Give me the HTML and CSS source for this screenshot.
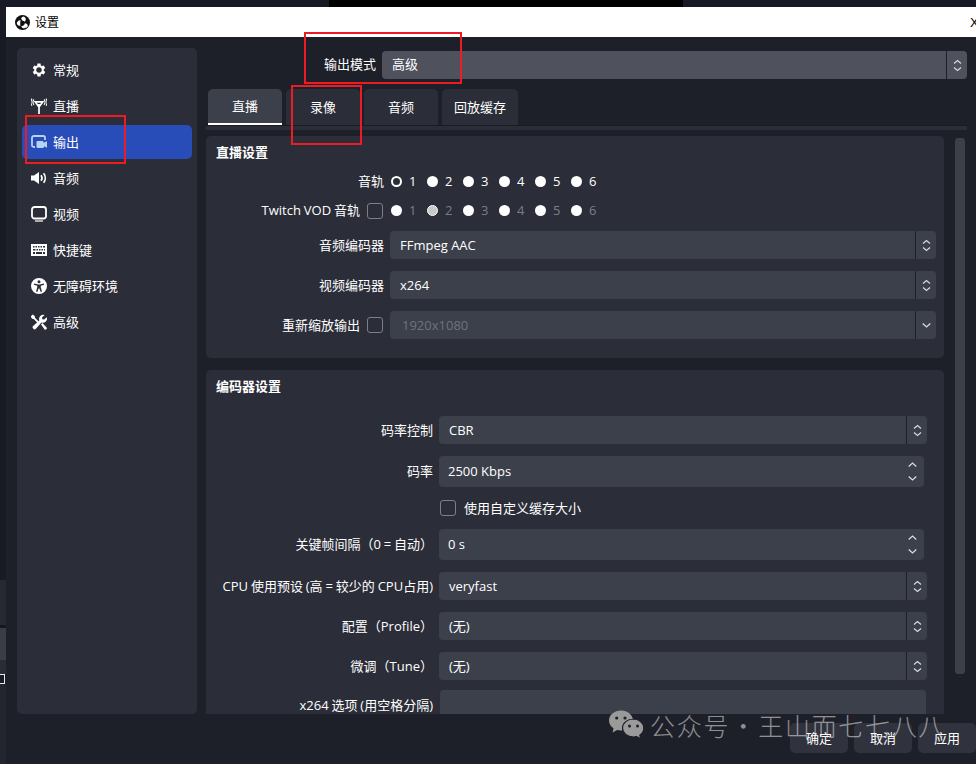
FILE: index.html
```html
<!DOCTYPE html>
<html lang="zh-CN">
<head>
<meta charset="utf-8">
<title>设置</title>
<link rel="stylesheet" href="styles.css">
</head>
<body>
<svg class="defs" width="0" height="0" aria-hidden="true">
  <defs>
    <symbol id="updown" viewBox="0 0 9 13"><path d="M1 4.500 4.500 1.500 8 4.500M1 8.500 4.500 11.500 8 8.500" fill="none" stroke="#d8dae0" stroke-width="1.200"/></symbol>
    <symbol id="spin-up" viewBox="0 0 9 5"><path d="M.7 4.400 4.500 1 8.300 4.400" fill="none" stroke="#d8dae0" stroke-width="1.300"/></symbol>
    <symbol id="spin-down" viewBox="0 0 9 5"><path d="M.7.6 4.500 4 8.300.6" fill="none" stroke="#d8dae0" stroke-width="1.300"/></symbol>
  </defs>
</svg>
<div class="page">
  <div class="topstrip">
    <div class="top-a"></div>
    <div class="top-b"></div>
    <div class="top-c"></div>
  </div>
  <div class="desk">
    <div class="behind">
      <div class="b1"></div>
      <div class="b2"></div>
      <div class="b3"></div>
      <div class="b4"></div>
      <div class="b5"></div>
      <div class="b6"></div>
      <div class="b7"></div>
    </div>
    <div class="window">
      <div class="titlebar">
        <svg class="obs" viewBox="0 0 16 16"><circle cx="8" cy="8" r="8" fill="#111"/><path d="M9 1.500a3.300 3.300 0 0 1 1.500 5.600A4 4 0 0 0 8 6.200 3 3 0 0 0 6.500 4.200 3.300 3.300 0 0 1 9 1.500zM1.900 8.800a3.300 3.300 0 0 1 4.300-2.900A4 4 0 0 0 5.600 8.800a3 3 0 0 0 .4 2.500 3.300 3.300 0 0 1-4.100-2.500zM11 13.600a3.300 3.300 0 0 1-4.500-1.500 4 4 0 0 0 2.800-1.100 3 3 0 0 0 1.100-2.200 3.300 3.300 0 0 1 3.300 3.100 3.300 3.300 0 0 1-2.700 1.700z" fill="#fff"/></svg>
        <span class="title-text">设置</span>
        <span class="close">X</span>
      </div>
      <div class="winbody">
        <div class="main">
          <nav class="sidebar">
            <div class="nav-item">
              <svg class="ico" viewBox="0 0 24 24"><path fill="#fff" d="M19.140 12.940c.04-.3.06-.61.06-.94 0-.32-.02-.64-.07-.94l2.030-1.580c.18-.14.23-.41.12-.61l-1.920-3.320c-.12-.22-.37-.29-.59-.22l-2.390.96c-.5-.38-1.030-.7-1.620-.94l-.36-2.540c-.04-.24-.24-.41-.48-.41h-3.840c-.24 0-.43.17-.47.41l-.36 2.540c-.59.24-1.130.57-1.620.94l-2.390-.96c-.22-.08-.47 0-.59.22L2.740 8.870c-.12.21-.08.47.12.61l2.030 1.580c-.05.3-.09.63-.09.94s.02.64.07.94l-2.030 1.580c-.18.14-.23.41-.12.61l1.920 3.320c.12.22.37.29.59.22l2.390-.96c.5.38 1.030.7 1.620.94l.36 2.540c.05.24.24.41.48.41h3.840c.24 0 .44-.17.47-.41l.36-2.540c.59-.24 1.130-.56 1.620-.94l2.390.96c.22.08.47 0 .59-.22l1.920-3.320c.12-.22.07-.47-.12-.61l-2.010-1.580zM12 16.200c-2.300 0-4.200-1.900-4.200-4.200s1.900-4.200 4.200-4.200 4.200 1.900 4.200 4.200-1.900 4.200-4.200 4.200z"/></svg>
              <span>常规</span>
            </div>
            <div class="nav-item">
              <svg class="ico" viewBox="0 0 16 16"><g fill="none" stroke="#fff"><path stroke-width="1.700" d="M8 6v10M4.300 3.900h7.400L8 9z"/><path stroke-width="1.100" d="M3 1.400C1.700 3 1.700 5.200 3 6.800M1 .6C-.5 3-.5 5.400 1 7.800M13 1.400c1.300 1.600 1.300 3.800 0 5.400M15 .6c1.500 2.400 1.500 4.800 0 7.200"/></g></svg>
              <span>直播</span>
            </div>
            <div class="nav-item active">
              <svg class="ico" viewBox="0 0 16 16"><path d="M4 13H2.800A1.800 1.800 0 0 1 1 11.200V3.800A1.800 1.800 0 0 1 2.800 2h9.400A1.800 1.800 0 0 1 14 3.800V6" fill="none" stroke="#b7d3f2" stroke-width="1.800"/><path d="M5.500 8.200c0-.7.5-1.200 1.200-1.200h4.600c.7 0 1.200.5 1.200 1.200v.6L16 7.200v6.600l-3-1.600v.6c0 .7-.5 1.200-1.200 1.200H6.700c-.7 0-1.200-.5-1.200-1.200z" fill="#b7d3f2"/></svg>
              <span>输出</span>
            </div>
            <div class="nav-item">
              <svg class="ico" viewBox="0 0 16 16"><path d="M0 5.500h3L8 2v12l-5-3.500H0z" fill="#fff"/><path d="M10 5.200c1.200 1.600 1.200 4 0 5.600M12.600 3.200c2.200 2.800 2.200 6.800 0 9.600" fill="none" stroke="#fff" stroke-width="1.700"/></svg>
              <span>音频</span>
            </div>
            <div class="nav-item">
              <svg class="ico" viewBox="0 0 16 16"><rect x="1" y="1" width="14" height="11.500" rx="2.500" fill="none" stroke="#fff" stroke-width="1.800"/><path d="M4 15h8" stroke="#fff" stroke-width="1.200"/></svg>
              <span>视频</span>
            </div>
            <div class="nav-item">
              <svg class="ico" viewBox="0 0 16 16"><path fill="#fff" fill-rule="evenodd" d="M0 2h16v12H0zM2 4v1.500h1.500V4zm2.500 0v1.500H6V4zM7 4v1.500h1.500V4zm2.500 0v1.500H11V4zM12 4v1.500h2V4zM2 7v1.500h2.500V7zm3.500 0v1.500H7V7zM8 7v1.500h1.500V7zm2.500 0v1.500H12V7zM13 7v1.500h1V7zM2 10v2h2v-2zm3 0v2h6v-2zm7 0v2h2v-2z"/></svg>
              <span>快捷键</span>
            </div>
            <div class="nav-item">
              <svg class="ico" viewBox="0 0 16 16"><path fill="#fff" fill-rule="evenodd" d="M8 0a8 8 0 1 1 0 16A8 8 0 0 1 8 0zm0 2.300a1.500 1.500 0 1 0 0 3 1.500 1.500 0 0 0 0-3zM3.300 5.500l-.4 1.300 3.300 1v1.700L5 13.600l1.300.4 1.300-3.600h.8l1.300 3.600 1.300-.4-1.200-4.100V7.800l3.300-1-.4-1.300-4 1.100H7.300z"/></svg>
              <span>无障碍环境</span>
            </div>
            <div class="nav-item">
              <svg class="ico" viewBox="0 0 16 16"><g fill="#fff"><path d="M1.500.5 3.800 2l.2 1.800L9.200 9l-1.300 1.300L2.700 5 1 4.800-.3 2.500z"/><path d="M15.800 3.200a4.200 4.200 0 0 1-5.300 5.300l-5.600 6.300a1.800 1.800 0 0 1-2.700-.2 1.800 1.800 0 0 1-.1-2.500l6.200-5.700a4.200 4.200 0 0 1 5.300-5.300L11 3.500l.3 1.800 1.800.3z"/><path d="m10 10.500 1.400-1.400 4 4.200a1.300 1.300 0 0 1-2 1.900z"/></g></svg>
              <span>高级</span>
            </div>
          </nav>
          <section class="pane">
            <div class="mode-row">
              <span class="mode-label">输出模式</span>
              <div class="combo combo-light">
                <span class="combo-text">高级</span>
                <span class="combo-btn"><svg class="ud" aria-hidden="true"><use href="#updown"/></svg></span>
              </div>
            </div>
            <div class="tabs">
              <div class="tab tab-on">直播</div>
              <div class="tab">录像</div>
              <div class="tab">音频</div>
              <div class="tab tab-wide">回放缓存</div>
            </div>
            <div class="tabband"></div>
            <div class="scroller">
              <div class="scroll-content">
                <div class="group group-stream">
                  <h2 class="group-title">直播设置</h2>
                  <div class="row">
                    <span class="label">音轨</span>
                    <div class="radios">
                      <span class="radio-item"><i class="radio radio-on"></i>1</span>
                      <span class="radio-item"><i class="radio"></i>2</span>
                      <span class="radio-item"><i class="radio"></i>3</span>
                      <span class="radio-item"><i class="radio"></i>4</span>
                      <span class="radio-item"><i class="radio"></i>5</span>
                      <span class="radio-item"><i class="radio"></i>6</span>
                    </div>
                  </div>
                  <div class="row">
                    <span class="label">Twitch VOD 音轨<i class="check"></i></span>
                    <div class="radios radios-off">
                      <span class="radio-item"><i class="radio"></i>1</span>
                      <span class="radio-item"><i class="radio radio-dim"></i>2</span>
                      <span class="radio-item"><i class="radio"></i>3</span>
                      <span class="radio-item"><i class="radio"></i>4</span>
                      <span class="radio-item"><i class="radio"></i>5</span>
                      <span class="radio-item"><i class="radio"></i>6</span>
                    </div>
                  </div>
                  <div class="row">
                    <span class="label">音频编码器</span>
                    <div class="combo"><span class="combo-text">FFmpeg AAC</span><span class="combo-btn"><svg class="ud" aria-hidden="true"><use href="#updown"/></svg></span></div>
                  </div>
                  <div class="row">
                    <span class="label">视频编码器</span>
                    <div class="combo"><span class="combo-text">x264</span><span class="combo-btn"><svg class="ud" aria-hidden="true"><use href="#updown"/></svg></span></div>
                  </div>
                  <div class="row">
                    <span class="label">重新缩放输出<i class="check"></i></span>
                    <div class="combo combo-off"><span class="combo-text">1920x1080</span><span class="combo-btn"><svg class="dn" aria-hidden="true"><use href="#spin-down"/></svg></span></div>
                  </div>
                </div>
                <div class="group group-encoder">
                  <h2 class="group-title">编码器设置</h2>
                  <div class="row">
                    <span class="label">码率控制</span>
                    <div class="combo"><span class="combo-text">CBR</span><span class="combo-btn"><svg class="ud" aria-hidden="true"><use href="#updown"/></svg></span></div>
                  </div>
                  <div class="row">
                    <span class="label">码率</span>
                    <div class="spin"><span class="spin-text">2500 Kbps</span><span class="spin-btns"><svg class="sa" aria-hidden="true"><use href="#spin-up"/></svg><svg class="sa" aria-hidden="true"><use href="#spin-down"/></svg></span></div>
                  </div>
                  <div class="row row-check">
                    <span class="label"></span>
                    <span class="check-line"><i class="check"></i>使用自定义缓存大小</span>
                  </div>
                  <div class="row">
                    <span class="label">关键帧间隔（0 = 自动）</span>
                    <div class="spin"><span class="spin-text">0 s</span><span class="spin-btns"><svg class="sa" aria-hidden="true"><use href="#spin-up"/></svg><svg class="sa" aria-hidden="true"><use href="#spin-down"/></svg></span></div>
                  </div>
                  <div class="row">
                    <span class="label">CPU 使用预设 (高 = 较少的 CPU占用)</span>
                    <div class="combo"><span class="combo-text">veryfast</span><span class="combo-btn"><svg class="ud" aria-hidden="true"><use href="#updown"/></svg></span></div>
                  </div>
                  <div class="row">
                    <span class="label">配置（Profile）</span>
                    <div class="combo"><span class="combo-text">(无)</span><span class="combo-btn"><svg class="ud" aria-hidden="true"><use href="#updown"/></svg></span></div>
                  </div>
                  <div class="row">
                    <span class="label">微调（Tune）</span>
                    <div class="combo"><span class="combo-text">(无)</span><span class="combo-btn"><svg class="ud" aria-hidden="true"><use href="#updown"/></svg></span></div>
                  </div>
                  <div class="row row-input">
                    <span class="label">x264 选项 (用空格分隔)</span>
                    <div class="textinput"></div>
                  </div>
                </div>
              </div>
              <div class="scrollbar"></div>
            </div>
          </section>
        </div>
        <div class="footer">
          <div class="btn">确定</div>
          <div class="btn">取消</div>
          <div class="btn">应用</div>
        </div>
      </div>
    </div>
  </div>
  <div class="red red-mode"></div>
  <div class="red red-tab"></div>
  <div class="red red-nav"></div>
  <div class="watermark">
    <svg class="wx" viewBox="0 0 36 30"><path d="M13 1C6.400 1 1 5.400 1 11c0 3.200 1.800 6 4.500 7.800L4.600 23l4.600-2.500c1.300.3 2.500.5 3.800.5 6.600 0 12-4.500 12-10S19.600 1 13 1z" fill="#9a9a9a"/><circle cx="8.700" cy="8.500" r="1.600" fill="#1e2029"/><circle cx="17" cy="8.500" r="1.600" fill="#1e2029"/><path d="M25.500 9.500C19.500 9.500 14.500 13.500 14.500 18.500s5 9 11 9c1.100 0 2.200-.2 3.200-.4l4 2.300-.9-3.700c2.400-1.700 4-4.300 4-7.200 0-5-5-9-10.800-9z" fill="#9a9a9a" stroke="#1e2029" stroke-width="1.200"/><circle cx="21.500" cy="16.500" r="1.500" fill="#1e2029"/><circle cx="29.500" cy="16.500" r="1.500" fill="#1e2029"/></svg>
    <span class="wm-text">公众号 · 王山而七七八八</span>
  </div>
</div>
</body>
</html>
```
FILE: styles.css
```css
* { box-sizing: border-box; }
html, body { margin: 0; padding: 0; background: #1e2029; }
body {
  font-family: "Open Sans", "Noto Sans CJK SC", sans-serif;
  font-size: 13px;
  line-height: 17px;
  color: #fff;
}
.defs { position: absolute; }
.page {
  position: relative;
  width: 976px;
  height: 764px;
  overflow: hidden;
  display: flex;
  flex-direction: column;
}
.topstrip { display: flex; height: 7px; flex: none; }
.top-a { width: 329px; background: #171925; }
.top-b { width: 354px; background: #000; }
.top-c { flex: 1; background: #171925; }
.desk { display: flex; flex: 1; min-height: 0; }
.behind { width: 6px; flex: none; display: flex; flex-direction: column; background: #1a1c24; }
.b1 { height: 573px; background: #191b24; }
.b2 { height: 45px; background: #262833; }
.b3 { height: 3px; background: #17181f; }
.b4 { height: 32px; background: #3a3c47; }
.b5 { height: 14px; background: #292b36; }
.b6 { height: 10px; width: 5px; border: 1px solid #e8e8e8; border-left: 0; }
.b7 { flex: 1; background: #232530; }

.window { flex: 1; min-width: 0; display: flex; flex-direction: column; background: #1e2029; }
.titlebar {
  height: 30px;
  flex: none;
  background: #fff;
  color: #000;
  display: flex;
  align-items: center;
  padding-left: 9px;
  font-size: 12px;
}
.obs { width: 15px; height: 15px; margin-right: 5px; flex: none; }
.close {
  margin-left: auto;
  font-family: "Liberation Sans", sans-serif;
  font-size: 13px;
  width: 6px;
  overflow: hidden;
}
.winbody { flex: 1; min-height: 0; display: flex; flex-direction: column; }
.main { display: flex; height: 677px; padding: 11px 9px 0 11px; gap: 9px; flex: none; }

.sidebar {
  width: 180px;
  height: 666px;
  background: #2b2d38;
  border-radius: 5px;
  padding: 5px;
  flex: none;
  display: flex;
  flex-direction: column;
  gap: 2px;
}
.nav-item {
  height: 34px;
  display: flex;
  align-items: center;
  padding-left: 9px;
  gap: 6px;
  border-radius: 5px;
  flex: none;
}
.ico { width: 16px; height: 16px; flex: none; }
.nav-item.active { background: #284cb8; }

.pane { flex: 1; min-width: 0; display: flex; flex-direction: column; }
.mode-row { display: flex; align-items: center; margin-top: 3px; height: 28px; flex: none; }
.mode-label { width: 170px; text-align: right; margin-right: 6px; flex: none; padding-bottom: 2px; }
.combo {
  flex: 1;
  min-width: 0;
  height: 28px;
  background: #3c404b;
  border-radius: 4px;
  display: flex;
  align-items: center;
}
.combo-light { background: #4f525d; }
.combo-text { flex: 1; padding-left: 10px; }
.combo-light .combo-text { padding-bottom: 2px; }
.combo-off .combo-text { padding-left: 12px; color: #70727a; }
.combo-btn {
  width: 21px;
  height: 100%;
  flex: none;
  border-left: 1px solid #1e2029;
  display: flex;
  align-items: center;
  justify-content: center;
}
.ud { width: 9px; height: 13px; }
.dn { width: 9px; height: 5px; }

.tabs { display: flex; gap: 4px; margin-top: 10px; padding-left: 2px; height: 37px; flex: none; border-bottom: 1px solid #191b22; }
.tab {
  width: 74px;
  height: 36px;
  background: #2b2d38;
  border-radius: 5px 5px 0 0;
  display: flex;
  align-items: center;
  justify-content: center;
}
.tab-wide { width: 76px; }
.tab-on { background: #3c404b; border-bottom: 2px solid #fff; }
.tabband { height: 4px; background: #2b2d38; flex: none; margin-bottom: 6px; }

.scroller { flex: 1; min-height: 0; display: flex; gap: 11px; overflow: hidden; padding-right: 2px; }
.scroll-content { width: 738px; flex: none; display: flex; flex-direction: column; gap: 12px; }
.scrollbar { width: 10px; height: 536px; margin-top: 2px; background: #3c404b; border-radius: 3px; flex: none; }

.group { background: #2b2d38; border-radius: 5px; padding-top: 8px; display: flex; flex-direction: column; gap: 12px; flex: none; }
.group-stream { height: 222px; padding-right: 8px; --label: 178px; }
.group-encoder { height: 370px; padding-right: 17px; --label: 227px; }
.group-title { margin: 0; padding-left: 10px; font-size: 13px; font-weight: 700; height: 18px; line-height: 16px; }
.group-stream .group-title { margin-bottom: -1px; }
.group-encoder .group-title { margin-bottom: 8px; }
.row { display: flex; align-items: center; gap: 6px; flex: none; min-height: 17px; }
.label { width: var(--label); flex: none; display: flex; align-items: center; justify-content: flex-end; white-space: pre; gap: 7px; word-spacing: -.5px; }
.check { width: 16px; height: 16px; flex: none; border: 1.5px solid #7d7f86; border-radius: 3px; display: block; margin-right: 1px; }
.radios { display: flex; padding-left: 1px; height: 17px; align-items: center; }
.radio-item { width: 36px; display: flex; align-items: center; gap: 7px; }
.radio { width: 11px; height: 11px; border-radius: 50%; background: #fff; display: block; flex: none; }
.radio-on { background: #2b2d38; border: 2.5px solid #fff; }
.radio-dim { background: #c9c9c9; border: 1.5px solid #fff; }
.radios-off .radio-item { color: #7c7e85; }

.spin {
  flex: 1;
  height: 31px;
  background: #3c404b;
  border-radius: 4px;
  margin-right: 3px;
  display: flex;
  align-items: center;
}
.spin-text { flex: 1; padding-left: 9px; }
.spin-btns { width: 24px; flex: none; display: flex; flex-direction: column; align-items: center; gap: 9px; }
.sa { width: 9px; height: 5px; }
.row-check { min-height: 18px; }
.check-line { display: flex; align-items: center; gap: 8px; padding-left: 1px; }
.check-line .check { margin-right: 0; }
.row-input { margin-top: -2px; }
.textinput { flex: 1; height: 31px; background: #3c404b; border-radius: 4px; margin-left: 1px; margin-right: 1px; }

.footer { display: flex; justify-content: flex-end; gap: 6px; padding-top: 9px; }
.btn { width: 58px; height: 30px; background: #30323d; border-radius: 5px; display: flex; align-items: center; justify-content: center; }

.red { position: absolute; border: 2px solid #ed1c24; pointer-events: none; }
.red-mode { left: 304px; top: 32px; width: 158px; height: 52px; }
.red-tab { left: 291px; top: 85px; width: 71px; height: 60px; }
.red-nav { left: 25px; top: 115px; width: 101px; height: 49px; }

.watermark { position: absolute; left: 608px; top: 709px; display: flex; align-items: center; gap: 6px; }
.wx { width: 36px; height: 31px; flex: none; }
.wm-text { font-size: 25px; letter-spacing: 1.7px; word-spacing: -6.5px; color: rgba(255,255,255,.5); white-space: pre; line-height: 30px; font-family: "Noto Sans CJK SC", sans-serif; font-weight: 300; }
```
